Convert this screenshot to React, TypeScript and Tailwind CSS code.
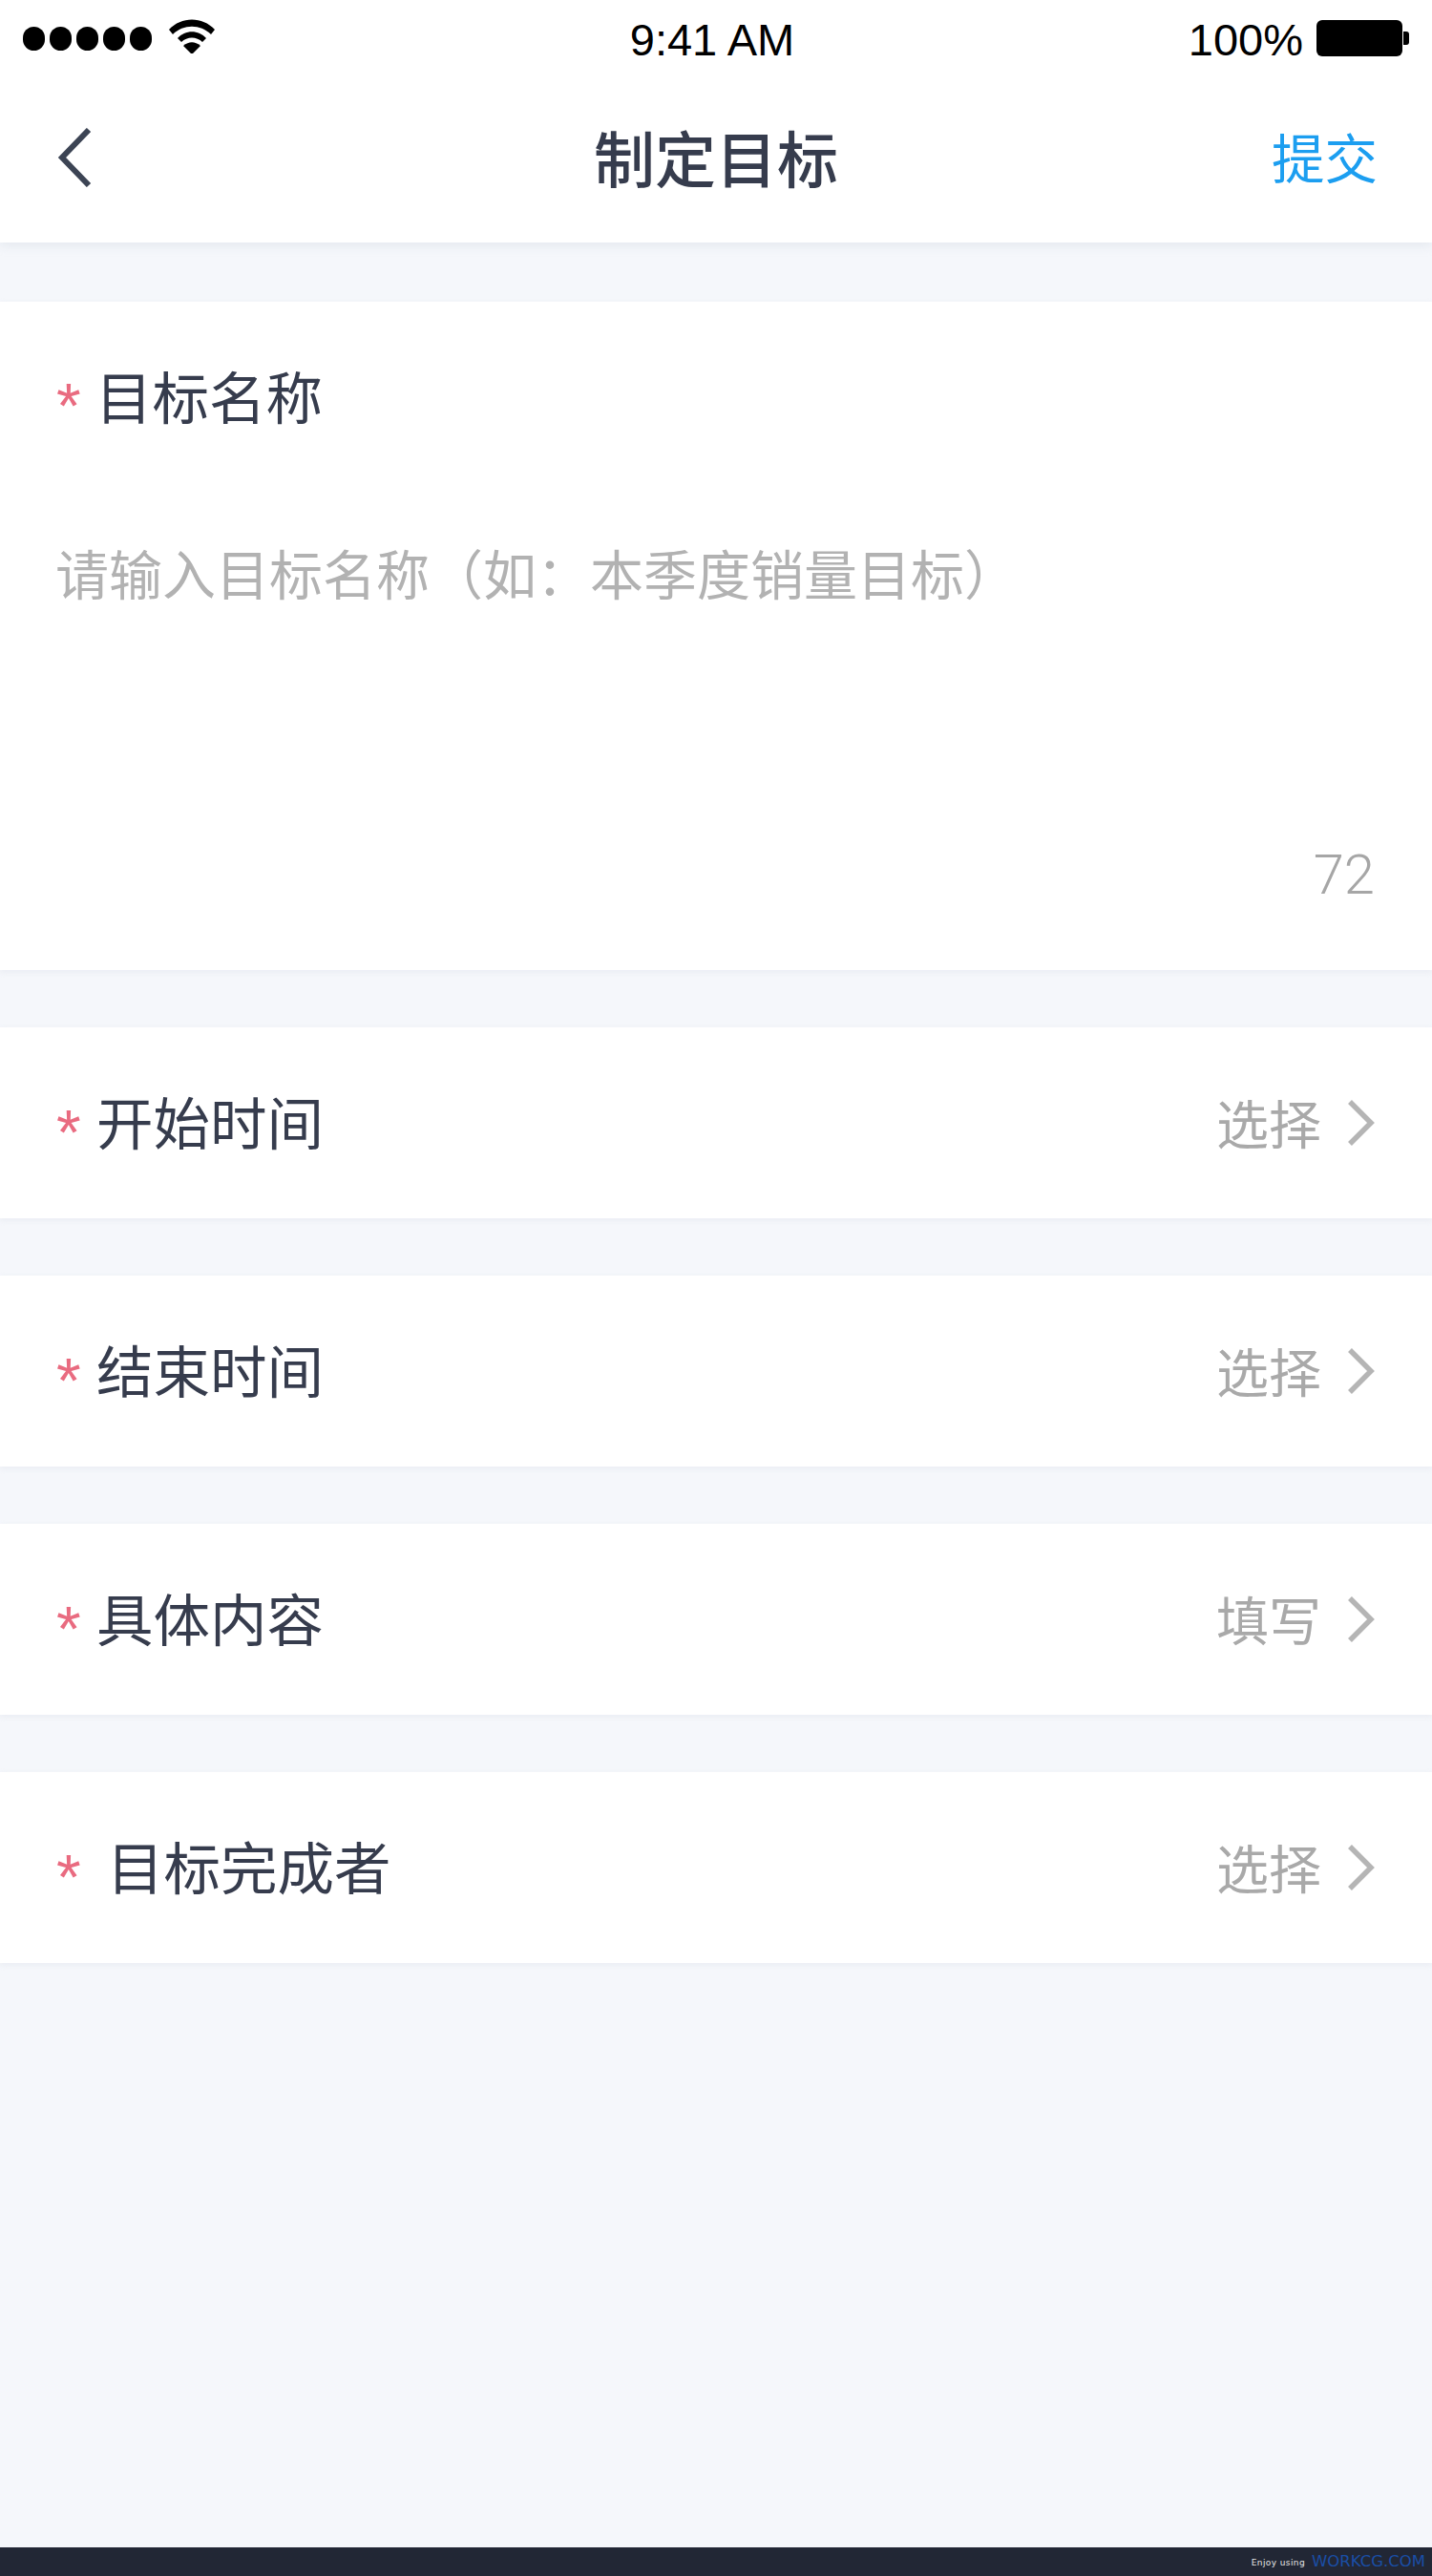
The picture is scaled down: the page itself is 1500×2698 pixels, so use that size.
const cjk = 'font-["Noto_Sans_CJK_SC","Noto_Sans",sans-serif]'

function Chevron({ className }: { className?: string }) {
  return (
    <svg className={className} width="30" height="50" viewBox="0 0 30 50" fill="none">
      <path d="M4 3L26 25L4 47" stroke="currentColor" strokeWidth="5.5" />
    </svg>
  )
}

function Star({ className }: { className?: string }) {
  return (
    <span className={`h-[40px] -mt-[3px] -ml-[1px] text-[66px] leading-[66px] text-[#e96b80] font-['Liberation_Sans',sans-serif] ${className}`}>*</span>
  )
}

function Row({ label, action, wide }: { label: string; action: string; wide?: boolean }) {
  return (
    <div className="h-[200px] bg-white shadow-[0_2px_6px_rgba(225,229,236,0.6)] flex items-center justify-between pl-[60px] pr-[60px]">
      <div className="flex items-center -mt-[4px]">
        <Star className={wide ? 'w-[53px]' : 'w-[42px]'} />
        <span className="text-[59.5px] leading-none text-[#363c4d]">{label}</span>
      </div>
      <div className="flex items-center text-[#a9a9a9]">
        <span className="text-[55px] leading-none -mt-[3px]">{action}</span>
        <Chevron className="ml-[26px] text-[#b5b5b5]" />
      </div>
    </div>
  )
}

export default function App() {
  return (
    <div className={`w-[1500px] h-[2698px] bg-[#f5f7fb] flex flex-col ${cjk}`}>
      <div className="h-[254px] bg-white shadow-[0_3px_10px_rgba(220,225,232,0.7)] relative">
        <div className="h-[80px] flex items-center justify-between pl-[24px] pr-[24px] text-black">
          <div className="flex items-center w-[500px]">
            <div className="flex gap-[5px]">
              <span className="w-[23px] h-[25px] rounded-full bg-black" />
              <span className="w-[23px] h-[25px] rounded-full bg-black" />
              <span className="w-[23px] h-[25px] rounded-full bg-black" />
              <span className="w-[23px] h-[25px] rounded-full bg-black" />
              <span className="w-[23px] h-[25px] rounded-full bg-black" />
            </div>
            <svg className="ml-[18px] -mt-[4px]" width="48" height="36" viewBox="0 0 48 36">
              <path d="M0 11C13 -3 35 -3 48 11L44 16C33 5 15 5 4 16Z" fill="#000" />
              <path d="M9 20C17 11 31 11 39 20L35 24C29 18 19 18 13 24Z" fill="#000" />
              <path d="M15 28C21 23 27 23 33 28L24 37Z" fill="#000" />
            </svg>
          </div>
          <span className="text-[47px] leading-none font-['Liberation_Sans',sans-serif] -ml-[8px] mt-[2px]">9:41 AM</span>
          <div className="flex items-center justify-end w-[500px]">
            <span className="text-[47px] leading-none font-['Liberation_Sans',sans-serif] mt-[2px]">100%</span>
            <div className="ml-[14px] w-[90px] h-[38px] rounded-[6px] bg-black" />
            <div className="ml-[1px] w-[6px] h-[14px] rounded-r-[3px] bg-black" />
          </div>
        </div>
        <div className="h-[166px] flex items-center justify-between pl-[60px] pr-[57px]">
          <svg className="text-[#3c4454] mt-[3px]" width="38" height="62" viewBox="0 0 38 62" fill="none">
            <path d="M33 2L5 31L33 60" stroke="currentColor" strokeWidth="6" />
          </svg>
          <span className="absolute left-0 right-0 text-center text-[64px] leading-none font-medium text-[#363c4d]">制定目标</span>
          <span className="text-[55.5px] leading-none text-[#1c9ef0] mt-[2px]">提交</span>
        </div>
      </div>

      <div className="mt-[62px] h-[700px] bg-white shadow-[0_2px_6px_rgba(225,229,236,0.6)] pl-[60px] pr-[60px] flex flex-col">
        <div className="mt-[68px] flex items-center">
          <Star className="w-[41px]" />
          <span className="text-[59.5px] leading-none text-[#363c4d]">目标名称</span>
        </div>
        <div className="mt-[127px] -ml-[2px] text-[56px] leading-none text-[#b2b2b2] whitespace-nowrap">请输入目标名称（如：本季度销量目标）</div>
        <div className="mt-[260px] text-right text-[58px] leading-none font-['Roboto',sans-serif] font-light text-[#a6a6a6]">72</div>
      </div>

      <div className="mt-[60px] flex flex-col gap-[60px]">
        <Row label="开始时间" action="选择" />
        <Row label="结束时间" action="选择" />
        <Row label="具体内容" action="填写" />
        <Row label="目标完成者" action="选择" wide />
      </div>

      <div className="mt-auto h-[30px] bg-[#222735] flex items-center justify-end pr-[7px]">
        <span className="text-[9px] leading-none text-[#e8e8e8] font-['DejaVu_Sans',sans-serif] tracking-[0.4px] mt-[3px]">Enjoy using</span>
        <span className="ml-[7px] text-[16.5px] leading-none text-[#1a4ea6] font-['DejaVu_Sans',sans-serif]">WORKCG.COM</span>
      </div>
    </div>
  )
}
